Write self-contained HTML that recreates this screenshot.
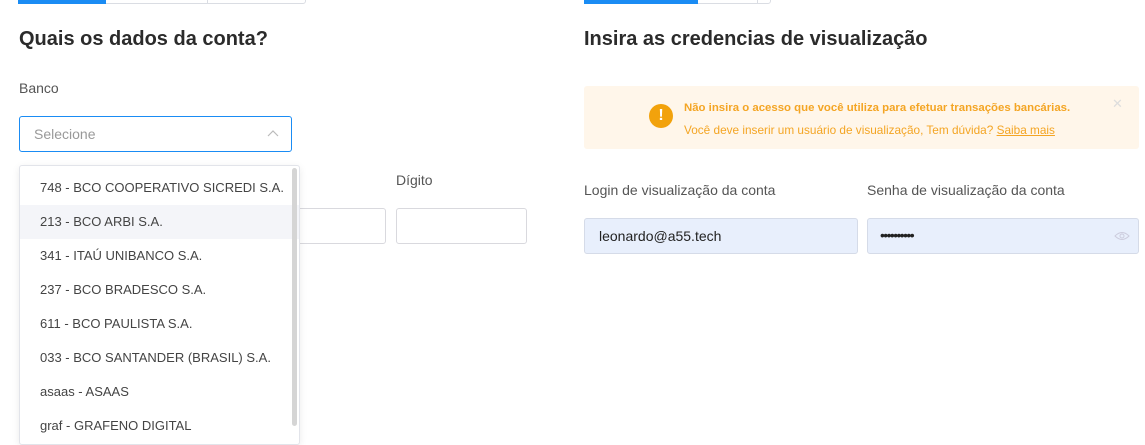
<!DOCTYPE html>
<html><head><meta charset="utf-8"><style>
*{box-sizing:border-box;margin:0;padding:0}
body{width:1145px;height:439px;overflow:hidden;background:#fff;font-family:"Liberation Sans",sans-serif;position:relative;color:#333}
.a{position:absolute}
h2{position:absolute;font-size:20px;font-weight:bold;color:#2b2b2b;white-space:nowrap}
.lbl{position:absolute;font-size:14px;color:#555;white-space:nowrap}
.inp{position:absolute;border:1px solid #d9d9de;border-radius:3px;background:#fff}
.item{height:34px;line-height:34px;padding-left:20px;font-size:13px;color:#444;white-space:nowrap}
</style></head><body>
<div class="a" style="left:18px;top:-6px;width:288px;height:10px;border:1px solid #dadde3;border-radius:3px"></div>
<div class="a" style="left:18px;top:0;width:88px;height:4px;background:#1a8cf4"></div>
<div class="a" style="left:207px;top:0;width:1px;height:4px;background:#dadde3"></div>
<div class="a" style="left:584px;top:-6px;width:187px;height:10px;border:1px solid #dadde3;border-radius:3px"></div>
<div class="a" style="left:584px;top:0;width:114px;height:4px;background:#1a8cf4"></div>
<div class="a" style="left:757px;top:0;width:1px;height:4px;background:#dadde3"></div>

<h2 style="left:19px;top:28px">Quais os dados da conta?</h2>
<div class="lbl" style="left:19px;top:80px">Banco</div>
<div class="a" style="left:19px;top:116px;width:273px;height:36px;border:1px solid #1a8cf4;border-radius:3px"></div>
<div class="a" style="left:34px;top:126px;font-size:14px;color:#999">Selecione</div>
<svg class="a" style="left:266px;top:128px" width="14" height="10"><path d="M2 8 L7 3 L12 8" fill="none" stroke="#bbb" stroke-width="1.2"/></svg>
<div class="lbl" style="left:396px;top:172px">Dígito</div>
<div class="inp" style="left:280px;top:208px;width:106px;height:36px"></div>
<div class="inp" style="left:396px;top:208px;width:131px;height:36px"></div>

<div class="a" style="left:19px;top:165px;width:281px;height:280px;background:#fff;border:1px solid #e2e4ea;border-radius:3px;box-shadow:0 2px 8px rgba(0,0,0,.08)">
<div style="height:5px"></div>
<div class="item">748 - BCO COOPERATIVO SICREDI S.A.</div>
<div class="item" style="background:#f4f5f9">213 - BCO ARBI S.A.</div>
<div class="item">341 - ITAÚ UNIBANCO S.A.</div>
<div class="item">237 - BCO BRADESCO S.A.</div>
<div class="item">611 - BCO PAULISTA S.A.</div>
<div class="item">033 - BCO SANTANDER (BRASIL) S.A.</div>
<div class="item">asaas - ASAAS</div>
<div class="item">graf - GRAFENO DIGITAL</div>
</div>
<div class="a" style="left:292px;top:168px;width:5px;height:258px;background:#d5d5d5;border-radius:3px"></div>

<h2 style="left:584px;top:28px">Insira as credencias de visualização</h2>
<div class="a" style="left:584px;top:86px;width:555px;height:63px;background:#fff6ea;border-radius:3px"></div>
<div class="a" style="left:649px;top:104px;width:24px;height:24px;border-radius:50%;background:#f2a20c;color:#fff;font-weight:bold;font-size:16px;text-align:center;line-height:24px">!</div>
<div class="a" style="left:684px;top:102px;font-size:11.4px;font-weight:bold;color:#f4a524;white-space:nowrap">Não insira o acesso que você utiliza para efetuar transações bancárias.</div>
<div class="a" style="left:684px;top:123px;font-size:11.8px;color:#f4a524;white-space:nowrap">Você deve inserir um usuário de visualização, Tem dúvida? <u>Saiba mais</u></div>
<div class="a" style="left:1112px;top:96px;font-size:13px;color:#ddd">✕</div>

<div class="lbl" style="left:584px;top:182px">Login de visualização da conta</div>
<div class="lbl" style="left:867px;top:182px">Senha de visualização da conta</div>
<div class="inp" style="left:584px;top:218px;width:274px;height:36px;background:#e8effc;border-color:#d5dbe8"></div>
<div class="a" style="left:599px;top:228px;font-size:14px;color:#222">leonardo@a55.tech</div>
<div class="inp" style="left:867px;top:218px;width:272px;height:36px;background:#e8effc;border-color:#d5dbe8"></div>
<div class="a" style="left:880px;top:227px;font-size:14px;color:#222;letter-spacing:-1.6px">••••••••••</div>
<svg class="a" style="left:1114px;top:230px" width="16" height="12"><path d="M1 6 Q8 -1 15 6 Q8 13 1 6Z" fill="none" stroke="#ccd" stroke-width="1"/><circle cx="8" cy="6" r="2" fill="none" stroke="#ccd"/></svg>
</body></html>
